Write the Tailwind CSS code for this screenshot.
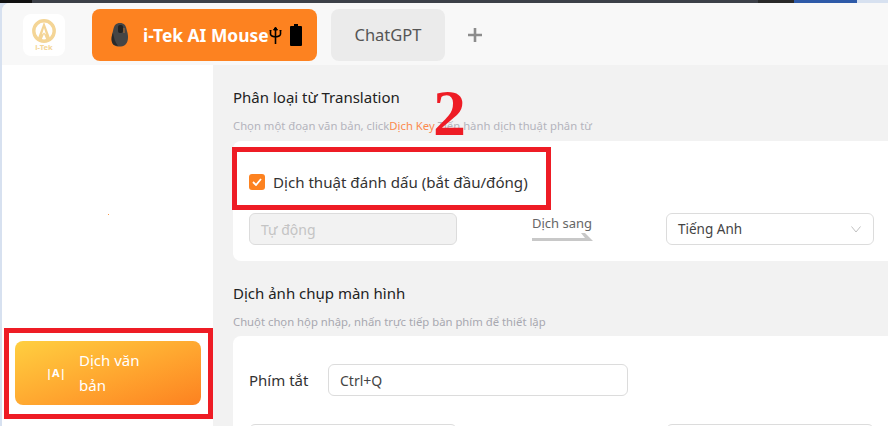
<!DOCTYPE html>
<html lang="en">
<head>
    <meta charset="UTF-8" />
    <title>i-Tek AI Mouse</title>
    <script src="https://cdn.jsdelivr.net/npm/@tailwindcss/browser@4"></script>
</head>
<body class="bg-[#d7e1f0] font-['Noto_Sans','Open_Sans',sans-serif] overflow-hidden">
<div class="relative w-[888px] h-[426px] overflow-hidden">
    <!-- Browser edge -->
    <div class="flex h-[3px] bg-[#3c4048]">
        <div class="w-[32px] bg-[#111]"></div>
        <div class="flex-1"></div>
        <div class="w-[36px] bg-[#2a2a2a]"></div>
        <div class="w-[63px] bg-[#2e5aa8]"></div>
        <div class="w-[31px] bg-[#d7e1f0]"></div>
    </div>

    <div class="ml-[2px] h-[423px] flex flex-col rounded-tl-lg overflow-hidden bg-[#f8f8f8]">
        <!-- Header -->
        <header class="h-[62px] shrink-0 flex items-center pt-[2px] pl-[21px] bg-[#f8f8f8]">
            <div class="w-[42px] h-[42px] bg-white rounded-lg flex flex-col items-center justify-center">
                <svg width="24" height="24" viewBox="0 0 24 24" fill="none">
                    <circle cx="12" cy="12" r="10.2" stroke="#f4d596" stroke-width="3.4"/>
                    <path d="M12 3 L18 19 L15 22 L12 15 L9 22 L6 19 Z" fill="#f4d596"/>
                    <path d="M12 9 L14 15.5 L12 13.5 L10 15.5 Z" fill="#fff"/>
                </svg>
                <span class="text-[7.5px] leading-[9px] font-bold text-[#f4d596]">i-Tek</span>
            </div>
            <div class="ml-[27px] w-[225px] h-[52px] bg-[#fd8220] rounded-lg flex items-center pl-[19px]">
                <svg width="18" height="24" viewBox="0 0 18 24" class="shrink-0">
                    <path d="M9 0 C13 0 15 2 16 8 C18 14 17 20 14 22 C11 24 6 24 3 22 C0 20 0 14 2 8 C3 2 5 0 9 0 Z" fill="#454545"/>
                    <rect x="7" y="2" width="5" height="8" rx="2" fill="#222"/>
                    <path d="M12 5 h2 v5 h-2 Z" fill="#7d5a3a"/>
                    <path d="M2 10 C3 15 4 19 7 23 L3 22 C0 20 0 14 2 10 Z" fill="#2a2a2a"/>
                </svg>
                <span class="ml-[14px] text-white font-bold text-[17.4px] whitespace-nowrap">i-Tek AI Mouse</span>
                <!-- usb and battery status icons -->
                <svg width="13" height="17" viewBox="0 0 13 17" class="shrink-0" fill="none" stroke="#000" stroke-width="1.6">
                    <path d="M6.5 3 V17 M1.5 4 V7 C1.5 9 3 9.5 6.5 10 C10 9.5 11.5 9 11.5 7 V4"/>
                    <path d="M6.5 0 L8.5 3 H4.5 Z M0.5 3.5 H2.5 M10.5 3.5 H12.5" fill="#000" stroke-width="1"/>
                </svg>
                <svg width="12" height="22" viewBox="0 0 12 22" class="ml-[8px] shrink-0">
                    <path d="M4 0 H8 V2 H11 Q12 2 12 3 V21 Q12 22 11 22 H1 Q0 22 0 21 V3 Q0 2 1 2 H4 Z" fill="#000"/>
                </svg>
            </div>
            <div class="ml-[14px] w-[114px] h-[52px] bg-[#ebebeb] rounded-lg flex items-center justify-center text-[#555] text-[16.5px]">ChatGPT</div>
            <svg width="16" height="16" viewBox="0 0 16 16" class="ml-[22px]">
                <path d="M8 1 V15 M1 8 H15" stroke="#8c8c8c" stroke-width="2.6"/>
            </svg>
        </header>

        <div class="flex-1 flex min-h-0">
            <!-- Sidebar -->
            <aside class="w-[211px] shrink-0 bg-white flex flex-col justify-end pb-[21px] pl-[13px] relative">
                <div class="w-[186px] h-[64px] rounded-lg bg-gradient-to-br from-[#ffcf40] to-[#fc8120] flex items-center text-white">
                    <span class="ml-[31px] w-[14px] text-[11px] font-bold text-center whitespace-nowrap">|A|</span>
                    <span class="ml-[19px] w-[80px] text-[15px] leading-[25px]">Dịch văn bản</span>
                </div>
                <div class="absolute left-[106px] top-[149px] w-[1px] h-[1px] bg-[#f79a4a]"></div>
            </aside>

            <!-- Main -->
            <main class="flex-1 bg-[#f2f2f2] pl-[20px] overflow-hidden">
                <h2 class="mt-[21px] text-[15px] leading-[22px] text-[#222]">Phân loại từ Translation</h2>
                <p class="mt-[10px] text-[11.3px] leading-[16px] text-[#b4b4bd] whitespace-nowrap">Chọn một đoạn văn bản, click<span class="text-[#fb8a4e]">Dịch Key</span> Tiến hành dịch thuật phân từ</p>

                <section class="mt-[7px] h-[120px] bg-white rounded-l-lg pl-[16px] pt-[30px]">
                    <label class="flex items-center h-[22px]">
                        <span class="w-[16px] h-[16px] rounded-[3px] bg-[#fd8220] flex items-center justify-center">
                            <svg width="10" height="8" viewBox="0 0 10 8" fill="none"><path d="M1 4 L4 7 L9 1" stroke="#fff" stroke-width="1.8"/></svg>
                        </span>
                        <span class="ml-[8px] text-[15.1px] text-[#333] whitespace-nowrap">Dịch thuật đánh dấu (bắt đầu/đóng)</span>
                    </label>
                    <div class="mt-[20px] flex items-center">
                        <div class="w-[208px] h-[32px] rounded-md border border-[#dcdcdc] bg-[#f2f2f2] pl-[11px] flex items-center text-[14px] text-[#c4c4c4]">Tự động</div>
                        <div class="ml-[75px] w-[60px] flex flex-col items-center -mt-[2px]">
                            <span class="text-[13px] leading-[18px] text-[#666] whitespace-nowrap">Dịch sang</span>
                            <svg width="62" height="10" viewBox="0 0 62 10"><path d="M1 9 H62 L54 1 H50 L54 6 H1 Z" fill="#c8c8c8"/></svg>
                        </div>
                        <div class="ml-[74px] w-[208px] h-[32px] rounded-md border border-[#dcdcdc] bg-white pl-[11px] pr-[12px] flex items-center justify-between text-[13.5px] text-[#444]">
                            Tiếng Anh
                            <svg width="10" height="7" viewBox="0 0 10 7" fill="none"><path d="M0.5 0.5 L5 6 L9.5 0.5" stroke="#c0c0c0"/></svg>
                        </div>
                    </div>
                </section>

                <h2 class="mt-[21px] text-[15px] leading-[22px] text-[#222]">Dịch ảnh chụp màn hình</h2>
                <p class="mt-[10px] text-[11.3px] leading-[16px] text-[#a8a8b0] whitespace-nowrap">Chuột chọn hộp nhập, nhấn trực tiếp bàn phím để thiết lập</p>

                <section class="mt-[6px] h-[120px] bg-white rounded-l-lg pl-[16px] pt-[28px]">
                    <div class="flex items-center">
                        <span class="w-[79px] text-[15px] text-[#333]">Phím tắt</span>
                        <div class="w-[300px] h-[32px] rounded-md border border-[#dcdcdc] pl-[11px] flex items-center text-[14px] text-[#444]">Ctrl+Q</div>
                    </div>
                    <div class="mt-[28px] flex">
                        <div class="w-[208px] h-[32px] rounded-md border border-[#dcdcdc]"></div>
                        <div class="ml-[209px] w-[208px] h-[32px] rounded-md border border-[#dcdcdc]"></div>
                    </div>
                </section>
            </main>
        </div>
    </div>

    <!-- Annotation overlays -->
    <div class="absolute left-[232px] top-[147px] w-[319px] h-[63px] border-[5px] border-[#ee1c25]"></div>
    <div class="absolute left-[4px] top-[328px] w-[209px] h-[91px] border-[5px] border-[#ee1c25]"></div>
    <span class="absolute left-[433px] top-[77px] text-[66px] leading-[72px] font-bold font-['Liberation_Serif',serif] text-[#ee1c25]">2</span>
</div>
</body>
</html>
